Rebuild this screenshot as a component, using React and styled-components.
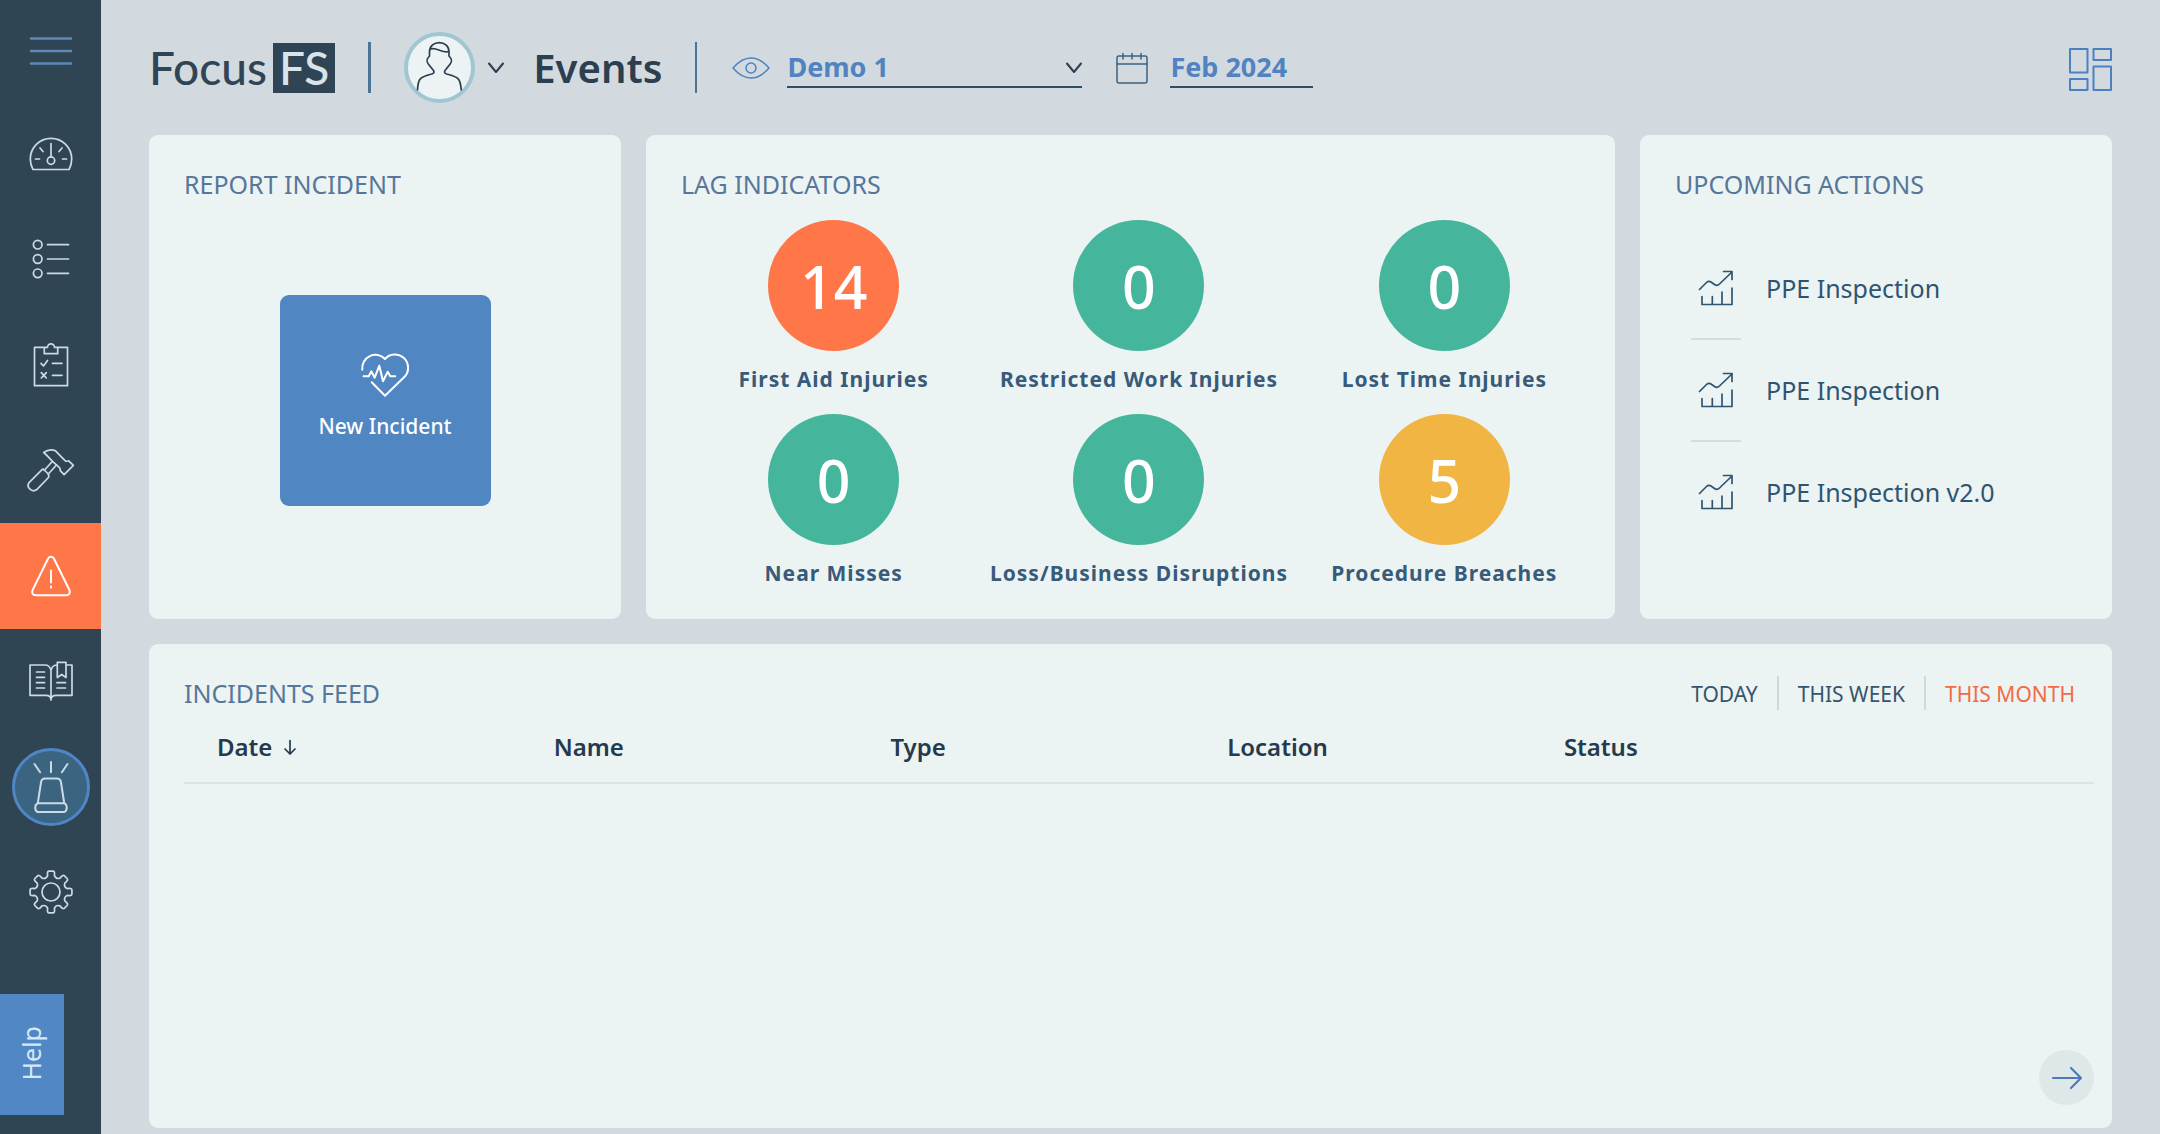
import React, { useState } from 'react';
import styled, { createGlobalStyle } from 'styled-components';

const GlobalStyle = createGlobalStyle`
  * {
    box-sizing: border-box;
  }
  body {
    margin: 0;
    background: #d2dae0;
    color: #2f5470;
    font-family: 'Noto Sans', sans-serif;
  }
  button, input, select {
    font-family: inherit;
    color: inherit;
  }
  svg {
    display: block;
    flex: none;
    overflow: visible;
    fill: none;
    stroke: currentColor;
    stroke-linecap: round;
    stroke-linejoin: round;
  }
`;

const Page = styled.div`
  display: flex;
  min-height: 100vh;
`;

/* ---------- sidebar ---------- */

const Sidebar = styled.aside`
  display: flex;
  flex-direction: column;
  flex: none;
  width: 101px;
  min-height: 100vh;
  background: #304554;
`;

const MenuButton = styled.button`
  display: flex;
  align-items: center;
  justify-content: center;
  height: 101px;
  padding: 0;
  border: 0;
  background: none;
  color: #5c8ab4;
  cursor: pointer;
`;

const Nav = styled.nav`
  display: flex;
  flex-direction: column;
  flex: 1;
`;

const NavItem = styled.a`
  display: flex;
  flex: 1;
  align-items: center;
  justify-content: center;
  background: ${({ $active }) => ($active ? '#ff7648' : 'transparent')};
  color: ${({ $active }) => ($active ? '#ffffff' : '#cbdae4')};
`;

const AlarmRing = styled.span`
  display: flex;
  align-items: center;
  justify-content: center;
  width: 78px;
  height: 78px;
  border: 3px solid #4f86c6;
  border-radius: 50%;
  background: #3a6480;
`;

const HelpButton = styled.button`
  width: 64px;
  height: 121px;
  margin: 49px 0 19px;
  padding: 4px 2px 0 0;
  border: 0;
  background: #5087c4;
  color: #d6e8f8;
  font-size: 25px;
  line-height: 34px;
  cursor: pointer;
`;

const HelpText = styled.span`
  display: inline-block;
  writing-mode: vertical-rl;
  transform: rotate(180deg);
`;

/* ---------- header ---------- */

const Content = styled.div`
  display: flex;
  flex-direction: column;
  flex: 1;
  min-width: 0;
  padding: 0 48px 6px;
`;

const Header = styled.header`
  display: flex;
  align-items: center;
  gap: 33px;
  height: 135px;
  color: #2b3f50;
`;

const Logo = styled.a`
  display: flex;
  align-items: center;
  gap: 6px;
  color: #2f4556;
  font-family: Lato, sans-serif;
  font-size: 46px;
  font-weight: 500;
  line-height: 50px;
  text-decoration: none;
`;

const LogoBox = styled.span`
  padding: 0 6px;
  background: #2f4556;
  color: #d8e3ea;
`;

const Divider = styled.span`
  width: ${({ $thick }) => ($thick ? '3px' : '2px')};
  height: 51px;
  background: #4b7495;
`;

const PageHeading = styled.div`
  display: flex;
  align-items: center;
  gap: 29px;
`;

const UserButton = styled.button`
  display: flex;
  align-items: center;
  gap: 13px;
  padding: 0;
  border: 0;
  background: none;
  cursor: pointer;
`;

const Avatar = styled.span`
  width: 71px;
  height: 71px;
  border: 4px solid #a0c6d4;
  border-radius: 50%;
  background: #edf3f4;
`;

const PageTitle = styled.h1`
  margin: 0;
  font-size: 40px;
  font-weight: 600;
  line-height: 54px;
`;

const Filters = styled.div`
  display: flex;
  align-items: center;
  gap: 34px;
  padding-left: 2px;
`;

const Filter = styled.label`
  display: flex;
  align-items: center;
  gap: ${({ $gap }) => $gap};
  color: ${({ $color }) => $color};
`;

const SelectBox = styled.span`
  display: grid;
  align-items: center;
  width: 295px;
  color: #2b3f50;

  > * {
    grid-area: 1 / 1;
  }
  > svg {
    justify-self: end;
    pointer-events: none;
  }
`;

const fieldText = `
  height: 40px;
  padding: 0;
  border: 0;
  border-bottom: 2px solid #2d4f66;
  border-radius: 0;
  background: none;
  color: #5083c0;
  font-size: 27px;
  font-weight: 700;
  outline: none;
`;

const Select = styled.select`
  ${fieldText}
  appearance: none;
  width: 100%;
`;

const MonthInput = styled.input`
  ${fieldText}
  width: 143px;
`;

const LayoutButton = styled.button`
  margin-left: auto;
  padding: 3px 0 0;
  border: 0;
  background: none;
  color: #4c80bf;
  cursor: pointer;
`;

/* ---------- cards ---------- */

const Board = styled.main`
  display: grid;
  grid-template-columns: repeat(4, 1fr);
  grid-template-rows: 1fr 1fr;
  gap: 25px;
  flex: 1;
`;

const Card = styled.section`
  display: flex;
  flex-direction: column;
  grid-column: span ${({ $span }) => $span || 1};
  padding: 32px 18px 23px 35px;
  border-radius: 9px;
  background: #ecf3f3;
`;

const CardHead = styled.div`
  display: flex;
  align-items: center;
  justify-content: space-between;
  height: 34px;
`;

const CardTitle = styled.h2`
  margin: 0;
  color: #56779a;
  font-size: 25px;
  font-weight: 400;
  line-height: 34px;
  text-transform: uppercase;
`;

const NewIncident = styled.button`
  display: flex;
  flex-direction: column;
  align-items: center;
  justify-content: center;
  gap: 14px;
  width: 211px;
  height: 211px;
  margin: 94px 17px 0 0;
  align-self: center;
  padding: 0 0 11px;
  border: 0;
  border-radius: 9px;
  background: #5086c2;
  color: #ffffff;
  font-size: 21px;
  font-weight: 500;
  line-height: 28px;
  cursor: pointer;
`;

const Indicators = styled.div`
  display: grid;
  grid-template-columns: repeat(3, 1fr);
  row-gap: 21px;
  margin-top: 19px;
`;

const Indicator = styled.div`
  display: flex;
  flex-direction: column;
  align-items: center;
  gap: 14px;
`;

const Count = styled.span`
  display: flex;
  align-items: center;
  justify-content: center;
  width: 131px;
  height: 131px;
  border-radius: 50%;
  background: ${({ $tone }) => $tone};
  color: #ffffff;
  font-size: 59px;
  font-weight: 500;
`;

const IndicatorName = styled.span`
  color: #375b79;
  font-size: 21px;
  font-weight: 700;
  letter-spacing: 1px;
  line-height: 28px;
  white-space: nowrap;
`;

const ActionList = styled.ul`
  margin: 37px 0 0;
  padding: 0 0 0 16px;
  list-style: none;
`;

const ActionItem = styled.li`
  &:not(:last-child)::after {
    content: '';
    display: block;
    width: 50px;
    height: 2px;
    background: #d3dce0;
  }
`;

const ActionLink = styled.a`
  display: grid;
  grid-template-columns: 50px 1fr;
  align-items: center;
  gap: 25px;
  height: 100px;
  color: #2f5470;
  font-size: 25px;
  line-height: 34px;
  text-decoration: none;

  svg {
    justify-self: center;
  }
`;

/* ---------- incidents feed ---------- */

const Tabs = styled.div`
  display: flex;
`;

const Tab = styled.button`
  height: 34px;
  padding: 2px 19px 0;
  border: 0;
  border-left: 2px solid #cfd8dc;
  background: none;
  color: ${({ $active }) => ($active ? '#f26b43' : '#35556d')};
  font-size: 21px;
  line-height: 28px;
  text-transform: uppercase;
  cursor: pointer;

  &:first-child {
    border-left: 0;
  }
`;

const FeedTable = styled.table`
  width: 100%;
  margin-top: 21px;
  border-collapse: collapse;
  table-layout: fixed;
`;

const HeadCell = styled.th`
  width: ${({ $last }) => ($last ? 'auto' : '17.63%')};
  padding: 0 0 19px 33px;
  border-bottom: 2px solid #dbe3e6;
  color: #253a4b;
  font-size: 24px;
  font-weight: 600;
  line-height: 32px;
  text-align: left;
`;

const SortLabel = styled.span`
  display: flex;
  align-items: center;
  gap: 12px;
`;

const NextButton = styled.button`
  display: flex;
  align-items: center;
  justify-content: center;
  align-self: flex-end;
  width: 55px;
  height: 55px;
  margin-top: auto;
  padding: 0;
  border: 0;
  border-radius: 50%;
  background: #dfe8e9;
  color: #4a7aba;
  cursor: pointer;
`;

/* ---------- icons ---------- */

const Icon = ({ w = 48, h = 48, stroke = 1.7, children }) => (
    <svg width={w} height={h} viewBox={`0 0 ${w} ${h}`} strokeWidth={stroke} aria-hidden="true">
        {children}
    </svg>
);

const polar = (r, deg) => {
    const a = (deg * Math.PI) / 180;
    return `${(24 + r * Math.cos(a)).toFixed(2)} ${(24 + r * Math.sin(a)).toFixed(2)}`;
};

// eight rounded teeth joined by round valleys
const gearPath = () => {
    let d = `M${polar(16.5, -12)}`;
    for (let a = 0; a < 360; a += 45) {
        d += ` L${polar(18.5, a - 11)} Q${polar(21.2, a - 10)} ${polar(21, a - 5)}`;
        d += ` L${polar(21, a + 5)} Q${polar(21.2, a + 10)} ${polar(18.5, a + 11)}`;
        d += ` L${polar(16.5, a + 12)} Q${polar(13.6, a + 22.5)} ${polar(16.5, a + 33)}`;
    }
    return d + 'Z';
};

const GaugeIcon = () => (
    <Icon>
        <path d="M6 39.5C4 36 3.3 32 3.3 29a20.7 20.7 0 0 1 41.4 0c0 3-.7 7-2.7 10.5ZM24 13.5V27M8.5 29h4M35.5 29h4M13 18l3 3.5M35 18l-3 3.5" />
        <circle cx="24" cy="30.6" r="3.7" />
    </Icon>
);

const ListIcon = () => (
    <Icon>
        {[9.7, 24, 38.3].map((y) => (
            <g key={y}>
                <circle cx="10.7" cy={y} r="4.3" />
                <path d={`M20.5 ${y}H41.5`} />
            </g>
        ))}
    </Icon>
);

const ClipboardIcon = () => (
    <Icon>
        <path d="M17.3 6.3H7.5v38.4h33V6.3h-9.8M17.3 6.3h3.2a3.5 3.5 0 0 1 7 0h3.2v6.4H17.3Z" />
        <path d="M14 22.3l2.5 2.7 4-5.5M25.5 22.3H35M14.3 31.6l5 5.4M19.3 31.6l-5 5.4M25.5 34.3H35" />
    </Icon>
);

const HammerIcon = () => (
    <Icon>
        <path d="M16.7 6.5C20 4 25 3.3 28.5 4.8L38.3 14.8c1.3 1 2.3.2 3.4 0l4.7 4.6-9.3 9.3-3.9-4c.2-1.5-.2-2.5-1-3.4L25.5 15.3C22.5 12.5 20.5 9.5 16.7 6.5Z" />
        <path d="M25.3 15.5l-8 8.8M29.5 19l-8.2 9" />
        <path d="M15.3 23.3L2.3 36.3c-3.7 4.7 2.5 10.5 7.2 7.5L21 32c1.2-1.3.8-3 .3-4l-4-4c-.7-.8-1.3-1.2-2-.7Z" />
    </Icon>
);

const WarningIcon = () => (
    <Icon stroke={2}>
        <path d="M21 6.7c1.4-2.5 4.6-2.5 6 0L42.3 37.8c1.4 3-.1 5.5-3 5.5H8.7c-2.9 0-4.4-2.5-3-5.5ZM24 18.5v12M24 34.5v1" />
    </Icon>
);

const BookIcon = () => (
    <Icon>
        <path d="M24 13c-1-3.5-3-5-6-5H3v30.3h16c3 0 5 1.7 5 4.7ZM24 13c1-3.5 3-5 6.3-5M39 8h6v30.3H29c-3 0-5 1.7-5 4.7M30.3 5.3H39V20.5l-4.3-3-4.4 3Z" />
        <path d="M9.5 15h8M9.5 20.3h8M9.5 25.7h8M9.5 31h8M30 25.7h8.5M30 31h8.5" />
    </Icon>
);

const SirenIcon = () => (
    <Icon stroke={2}>
        <path d="M10.8 40L14 19.5c.3-2.6 1.8-4 4.2-4h11.6c2.4 0 3.9 1.4 4.2 4L37.2 40M10.5 40.3h27c3 1.5 3 7 0 8.7h-27c-3-1.5-3-7 0-8.7ZM7.5 1l5.6 8.3M24-1V9.3M40.5 1l-5.6 8.3" />
    </Icon>
);

const GearIcon = () => (
    <Icon>
        <path d={gearPath()} />
        <circle cx="24" cy="24" r="9" />
    </Icon>
);

const AvatarIcon = () => (
    <Icon w={63} h={63}>
        <path d="M21.5 20V16C21.5 3.5 41 3.5 41 16V20M22.5 13C29 11 34 17.5 41 15.5M21.5 20c-3 3-3.5 5-1.2 8l5.2 6.5c1.2 2 .3 3.3-3.5 4-9.5 2.5-12 4-12.5 15.3M41 20c3 3 3.5 5 1.2 8L37 34.5c-1.2 2-.3 3.3 3.5 4 9.5 2.5 12 4 12.7 15.3" />
    </Icon>
);

const ChevronIcon = () => (
    <Icon w={16} h={12} stroke={2}>
        <path d="M1 1.5l7 8.5 7-8.5" />
    </Icon>
);

const EyeIcon = () => (
    <Icon w={38} h={22} stroke={1.5}>
        <path d="M1 11C7 4 13 1 19 1s12 3 18 10c-6 7-12 10-18 10S7 18 1 11Z" />
        <circle cx="19" cy="11" r="5" />
    </Icon>
);

const CalendarIcon = () => (
    <Icon w={32} h={32} stroke={1.5}>
        <rect x="1" y="4" width="30" height="27" rx="2" />
        <path d="M1 12H31M7 1.5V7M16 1.5V7M25 1.5V7" />
    </Icon>
);

const LayoutIcon = () => (
    <Icon w={43} h={43} stroke={2}>
        <path d="M1 1h17.5v23.5H1ZM24.5 1H42v11H24.5ZM1 31h17.5v11H1ZM24.5 18.5H42V42H24.5Z" />
    </Icon>
);

const HeartIcon = () => (
    <Icon stroke={2}>
        <path d="M1.3 19.7A13.2 13.2 0 0 1 24 9a13.2 13.2 0 0 1 19.8 17.5L24 45.7 10.7 32.3" />
        <path d="M2.5 26.3h5.2l2.6-5 3.4 6.4 4.6-12L22 31.3l4.7-9.6 2.6 4.6h5" />
    </Icon>
);

const ChartIcon = () => (
    <Icon w={34} h={36}>
        <path d="M.5 19.5l7-7c1.5-1.5 3-1.5 4.5-.5l3.5 2.5c2 1.5 3.5 1 5-.5L33 2M24.5 1.5H33v8M3 26.5v8h30V18M13.3 34.5v-8M23 34.5V22" />
    </Icon>
);

const SortIcon = () => (
    <Icon w={12} h={16}>
        <path d="M6 1.5V15M1 10l5 5 5-5" />
    </Icon>
);

const ArrowIcon = () => (
    <Icon w={30} h={22} stroke={2.2}>
        <path d="M1 11H29M19 1L29 11 19 21" />
    </Icon>
);

/* ---------- data ---------- */

const GREEN = '#45b69b';
const ORANGE = '#ff7648';
const YELLOW = '#f0b543';

const navItems = [
    { name: 'Dashboard', icon: <GaugeIcon /> },
    { name: 'Tasks', icon: <ListIcon /> },
    { name: 'Inspections', icon: <ClipboardIcon /> },
    { name: 'Maintenance', icon: <HammerIcon /> },
    { name: 'Events', icon: <WarningIcon />, active: true },
    { name: 'Library', icon: <BookIcon /> },
    { name: 'Emergency', icon: <AlarmRing><SirenIcon /></AlarmRing> },
    { name: 'Settings', icon: <GearIcon /> },
];

const indicators = [
    { name: 'First Aid Injuries', count: 14, tone: ORANGE },
    { name: 'Restricted Work Injuries', count: 0, tone: GREEN },
    { name: 'Lost Time Injuries', count: 0, tone: GREEN },
    { name: 'Near Misses', count: 0, tone: GREEN },
    { name: 'Loss/Business Disruptions', count: 0, tone: GREEN },
    { name: 'Procedure Breaches', count: 5, tone: YELLOW },
];

const actions = ['PPE Inspection', 'PPE Inspection', 'PPE Inspection v2.0'];
const ranges = ['Today', 'This week', 'This month'];

const App = () => {
    const [range, setRange] = useState('This month');
    const [month, setMonth] = useState('Feb 2024');

    return (
        <>
            <GlobalStyle />
            <Page>
                <Sidebar>
                    <MenuButton aria-label="Menu">
                        <Icon stroke={2.6}>
                            <path d="M4 11.5H44M4 24H44M4 36.5H44" />
                        </Icon>
                    </MenuButton>
                    <Nav>
                        {navItems.map((item) => (
                            <NavItem key={item.name} href="#" aria-label={item.name} $active={item.active}>
                                {item.icon}
                            </NavItem>
                        ))}
                    </Nav>
                    <HelpButton>
                        <HelpText>Help</HelpText>
                    </HelpButton>
                </Sidebar>
                <Content>
                    <Header>
                        <Logo href="#">
                            Focus<LogoBox>FS</LogoBox>
                        </Logo>
                        <Divider $thick />
                        <PageHeading>
                            <UserButton aria-label="Account">
                                <Avatar><AvatarIcon /></Avatar>
                                <ChevronIcon />
                            </UserButton>
                            <PageTitle>Events</PageTitle>
                        </PageHeading>
                        <Divider />
                        <Filters>
                            <Filter $gap="17px" $color="#5083bd">
                                <EyeIcon />
                                <SelectBox>
                                    <Select aria-label="Site" defaultValue="Demo 1">
                                        <option>Demo 1</option>
                                    </Select>
                                    <ChevronIcon />
                                </SelectBox>
                            </Filter>
                            <Filter $gap="22px" $color="#3c6380">
                                <CalendarIcon />
                                <MonthInput
                                    aria-label="Month"
                                    value={month}
                                    onChange={(e) => setMonth(e.target.value)}
                                />
                            </Filter>
                        </Filters>
                        <LayoutButton aria-label="Edit layout"><LayoutIcon /></LayoutButton>
                    </Header>
                    <Board>
                        <Card>
                            <CardTitle>Report Incident</CardTitle>
                            <NewIncident>
                                <HeartIcon />
                                New Incident
                            </NewIncident>
                        </Card>
                        <Card $span={2}>
                            <CardTitle>Lag Indicators</CardTitle>
                            <Indicators>
                                {indicators.map((item) => (
                                    <Indicator key={item.name}>
                                        <Count $tone={item.tone}>{item.count}</Count>
                                        <IndicatorName>{item.name}</IndicatorName>
                                    </Indicator>
                                ))}
                            </Indicators>
                        </Card>
                        <Card>
                            <CardTitle>Upcoming Actions</CardTitle>
                            <ActionList>
                                {actions.map((name, index) => (
                                    <ActionItem key={index}>
                                        <ActionLink href="#">
                                            <ChartIcon />
                                            {name}
                                        </ActionLink>
                                    </ActionItem>
                                ))}
                            </ActionList>
                        </Card>
                        <Card $span={4}>
                            <CardHead>
                                <CardTitle>Incidents Feed</CardTitle>
                                <Tabs>
                                    {ranges.map((name) => (
                                        <Tab key={name} $active={name === range} onClick={() => setRange(name)}>
                                            {name}
                                        </Tab>
                                    ))}
                                </Tabs>
                            </CardHead>
                            <FeedTable>
                                <thead>
                                    <tr>
                                        <HeadCell scope="col">
                                            <SortLabel>Date <SortIcon /></SortLabel>
                                        </HeadCell>
                                        <HeadCell scope="col">Name</HeadCell>
                                        <HeadCell scope="col">Type</HeadCell>
                                        <HeadCell scope="col">Location</HeadCell>
                                        <HeadCell scope="col">Status</HeadCell>
                                        <HeadCell as="td" $last />
                                    </tr>
                                </thead>
                            </FeedTable>
                            <NextButton aria-label="Next"><ArrowIcon /></NextButton>
                        </Card>
                    </Board>
                </Content>
            </Page>
        </>
    );
};

export default App;
